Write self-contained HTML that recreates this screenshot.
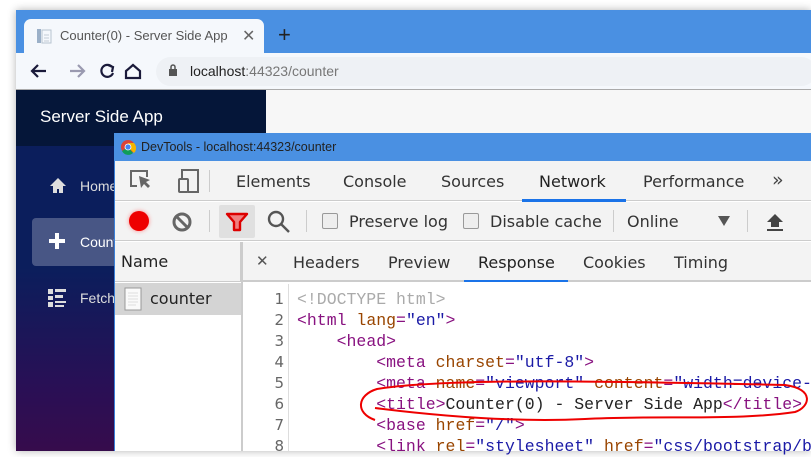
<!DOCTYPE html>
<html><head><meta charset="utf-8"><style>
*{box-sizing:border-box;margin:0;padding:0}
body{width:811px;height:451px;overflow:hidden;background:#fff;font-family:"Liberation Sans",sans-serif;position:relative}
.a{position:absolute}
.dt{font-family:"DejaVu Sans","Liberation Sans",sans-serif;color:#333}
.code{font-family:"Liberation Mono",monospace;font-size:16.5px;white-space:pre;line-height:21px}
.t{color:#881280}.n{color:#994500}.v{color:#1a1aa6}
</style></head><body>
<div class="a" style="left:16px;top:10px;width:795px;height:441px;box-shadow:0 0 8px rgba(0,0,0,.3)"></div>
<div class="a" style="left:16px;top:10px;width:795px;height:43px;background:#4a90e2"></div>
<div class="a" style="left:24px;top:19px;width:240px;height:36px;background:#f5f8fc;border-radius:7px 7px 0 0"></div>
<svg class="a" style="left:36px;top:28px" width="16" height="16"><rect x="1" y="1" width="4" height="14" fill="#9bb0c8"/><rect x="6" y="2" width="9" height="13" fill="none" stroke="#b8c4d0"/><path d="M8 7h5M8 10h5M8 13h5" stroke="#c4ccd6"/></svg>
<div class="a" style="left:60px;top:28px;font-size:13px;color:#555">Counter(0) - Server Side App</div>
<div class="a" style="left:242px;top:26px;font-size:16px;color:#666">✕</div>
<div class="a" style="left:278px;top:22px;font-size:22px;color:#222">+</div>
<div class="a" style="left:16px;top:53px;width:795px;height:37px;background:#f5f8fc;border-bottom:1px solid #aaa"></div>
<svg class="a" style="left:28px;top:61px" width="120" height="20" fill="none" stroke-width="2.2"><path d="M18 10H4M10 4L4 10l6 6" stroke="#1a1a3a"/><path d="M42 10h14M50 4l6 6-6 6" stroke="#9a9ab0"/><path d="M84 6a6 6 0 1 0 1 6" stroke="#1a1a3a"/><path d="M80 4l5 2-1 5" stroke="#1a1a3a"/><path d="M98 10l7-6 7 6v7h-14z" stroke="#1a1a3a"/></svg>
<div class="a" style="left:156px;top:57px;width:660px;height:29px;background:#eef1f5;border-radius:15px"></div>
<svg class="a" style="left:168px;top:64px" width="10" height="12"><rect x="1" y="5" width="8" height="7" fill="#555"/><path d="M3 5V3a2 2 0 0 1 4 0v2" stroke="#555" fill="none" stroke-width="1.5"/></svg>
<div class="a" style="left:190px;top:63px;font-size:14px;color:#222">localhost<span style="color:#777">:44323/counter</span></div>
<div class="a" style="left:266px;top:90px;width:545px;height:361px;background:#f7f7f7"></div>
<div class="a" style="left:16px;top:90px;width:250px;height:361px;background:linear-gradient(#0b1e5c 56px,#0b1e5c,#2a0f55 300px,#360c4c)"></div>
<div class="a" style="left:16px;top:90px;width:250px;height:56px;background:#051639"></div>
<div class="a" style="left:40px;top:107px;font-size:17px;color:#fff">Server Side App</div>
<div class="a" style="left:32px;top:218px;width:90px;height:48px;background:rgba(255,255,255,.25);border-radius:4px"></div>
<svg class="a" style="left:48px;top:176px" width="20" height="20"><path d="M2 10L10 2l8 8h-3v7h-4v-4H9v4H5v-7z" fill="#ddd"/></svg>
<div class="a" style="left:80px;top:178px;font-size:14px;color:#ddd">Home</div>
<svg class="a" style="left:47px;top:231px" width="20" height="20"><path d="M8 2h4v6h6v4h-6v6H8v-6H2V8h6z" fill="#fff"/></svg>
<div class="a" style="left:80px;top:234px;font-size:14px;color:#fff">Counter</div>
<svg class="a" style="left:47px;top:288px" width="20" height="20"><path d="M1 1h5v5H1zM1 8h5v4H1zM1 14h5v5H1zM8 1h11v3H8zM8 7h8v3H8zM8 13h11v2H8zM8 17h9v2H8z" fill="#ddd"/></svg>
<div class="a" style="left:80px;top:290px;font-size:14px;color:#ddd">Fetch</div>
<div class="a" style="left:114px;top:133px;width:697px;height:318px;background:#fff;border-left:1px solid #3a80d8"></div>
<div class="a" style="left:114px;top:133px;width:697px;height:28px;background:#4a90e2"></div>
<svg class="a" style="left:120px;top:139px" width="16" height="16"><circle cx="8" cy="8" r="7" fill="#db4437"/><path d="M8 8L2 12A7 7 0 0 0 13 14z" fill="#0f9d58"/><path d="M8 8l6 6A7 7 0 0 0 14 4L8 4z" fill="#f4b400"/><circle cx="8" cy="8" r="3.4" fill="#fff"/><circle cx="8" cy="8" r="2.6" fill="#4285f4"/></svg>
<div class="a" style="left:141px;top:140px;font-size:12.5px;color:#222">DevTools - localhost:44323/counter</div>
<div class="a" style="left:115px;top:161px;width:696px;height:40px;background:#f3f3f3;border-bottom:1px solid #ccc"></div>
<svg class="a" style="left:128px;top:168px" width="90" height="26" fill="none" stroke="#666" stroke-width="2"><path d="M9 18H3V3h16v6"/><path d="M11 8l2 12 3-4 4 4 2-2-4-4 4-2z" fill="#666" stroke="none"/><rect x="51" y="11" width="9" height="13" rx="1"/><path d="M54 11V2h16v22H60"/></svg>
<div class="a" style="left:209px;top:170px;width:1px;height:22px;background:#ccc"></div>
<div class="a dt" style="left:236px;top:172px;font-size:16px">Elements</div>
<div class="a dt" style="left:343px;top:172px;font-size:16px">Console</div>
<div class="a dt" style="left:441px;top:172px;font-size:16px">Sources</div>
<div class="a dt" style="left:539px;top:172px;font-size:16px;color:#222">Network</div>
<div class="a" style="left:522px;top:199px;width:104px;height:3px;background:#1a73e8"></div>
<div class="a dt" style="left:643px;top:172px;font-size:16px">Performance</div>
<div class="a dt" style="left:772px;top:169px;font-size:19px;color:#444">»</div>
<div class="a" style="left:115px;top:202px;width:696px;height:39px;background:#f3f3f3;border-bottom:1px solid #ccc"></div>
<div class="a" style="left:129px;top:211px;width:20px;height:20px;border-radius:50%;background:#e00;box-shadow:0 0 4px #f88"></div>
<svg class="a" style="left:171px;top:211px" width="22" height="22" fill="none" stroke="#666" stroke-width="3"><circle cx="11" cy="11" r="8"/><path d="M5 5l12 12"/></svg>
<div class="a" style="left:209px;top:210px;width:1px;height:22px;background:#ccc"></div>
<div class="a" style="left:219px;top:205px;width:36px;height:33px;background:#e0e0e0;border-radius:2px"></div>
<svg class="a" style="left:225px;top:211px" width="24" height="22"><path d="M2 3h20l-7 8v8h-6v-8z" fill="#f08080" stroke="#d00" stroke-width="2.4" stroke-linejoin="round"/></svg>
<svg class="a" style="left:267px;top:210px" width="24" height="24" fill="none" stroke="#555" stroke-width="2.4"><circle cx="9" cy="9" r="7"/><path d="M14 14l8 8"/></svg>
<div class="a" style="left:306px;top:210px;width:1px;height:22px;background:#ccc"></div>
<div class="a" style="left:322px;top:213px;width:16px;height:16px;border:1px solid #999;border-radius:2px;background:#eee"></div>
<div class="a dt" style="left:349px;top:212px;font-size:16px">Preserve log</div>
<div class="a" style="left:463px;top:213px;width:16px;height:16px;border:1px solid #999;border-radius:2px;background:#eee"></div>
<div class="a dt" style="left:490px;top:212px;font-size:16px">Disable cache</div>
<div class="a" style="left:613px;top:210px;width:1px;height:22px;background:#ccc"></div>
<div class="a dt" style="left:627px;top:212px;font-size:16px">Online</div>
<div class="a" style="left:718px;top:216px;width:0;height:0;border-left:6px solid transparent;border-right:6px solid transparent;border-top:10px solid #555"></div>
<div class="a" style="left:747px;top:210px;width:1px;height:22px;background:#ccc"></div>
<svg class="a" style="left:765px;top:212px" width="20" height="20"><path d="M10 2l8 8h-4v5H6v-5H2z M2 17h16v2H2z" fill="#444"/></svg>
<div class="a" style="left:115px;top:242px;width:126px;height:40px;background:#f3f3f3;border-bottom:1px solid #ccc;border-right:1px solid #ccc"></div>
<div class="a dt" style="left:121px;top:252px;font-size:16px;color:#222">Name</div>
<div class="a" style="left:115px;top:283px;width:126px;height:32px;background:#d4d4d4"></div>
<div class="a" style="left:241px;top:242px;width:2px;height:209px;background:#ccc"></div>
<svg class="a" style="left:124px;top:287px" width="18" height="24"><rect x="1" y="1" width="16" height="22" fill="#fafafa" stroke="#999"/><path d="M4 6h10M4 9h10M4 12h10M4 15h10M4 18h8" stroke="#ddd"/></svg>
<div class="a dt" style="left:150px;top:289px;font-size:16px;color:#222">counter</div>
<div class="a" style="left:243px;top:242px;width:568px;height:40px;background:#f3f3f3;border-bottom:2px solid #ccc"></div>
<div class="a dt" style="left:256px;top:252px;font-size:15px;color:#555">✕</div>
<div class="a dt" style="left:293px;top:253px;font-size:16px">Headers</div>
<div class="a dt" style="left:388px;top:253px;font-size:16px">Preview</div>
<div class="a dt" style="left:478px;top:253px;font-size:16px;color:#222">Response</div>
<div class="a" style="left:464px;top:280px;width:104px;height:2px;background:#1a73e8"></div>
<div class="a dt" style="left:583px;top:253px;font-size:16px">Cookies</div>
<div class="a dt" style="left:674px;top:253px;font-size:16px">Timing</div>
<div class="a" style="left:288px;top:284px;width:1px;height:167px;background:#ddd"></div>
<div class="a code" style="left:258px;top:289px;width:26px;text-align:right;color:#666;font-family:'DejaVu Sans',sans-serif;font-size:15px">1
2
3
4
5
6
7
8</div>
<div class="a code" style="left:297px;top:289px"><span style="color:#aaa">&lt;!DOCTYPE html&gt;</span>
<span class="t">&lt;html </span><span class="n">lang</span><span class="t">=</span><span class="v">"en"</span><span class="t">&gt;</span>
    <span class="t">&lt;head&gt;</span>
        <span class="t">&lt;meta </span><span class="n">charset</span><span class="t">=</span><span class="v">"utf-8"</span><span class="t">&gt;</span>
        <span class="t">&lt;meta </span><span class="n">name</span><span class="t">=</span><span class="v">"viewport"</span> <span class="n">content</span><span class="t">=</span><span class="v">"width=device-</span>
        <span class="t">&lt;title&gt;</span><span style="color:#222">Counter(0) - Server Side App</span><span class="t">&lt;/title&gt;</span>
        <span class="t">&lt;base </span><span class="n">href</span><span class="t">=</span><span class="v">"/"</span><span class="t">&gt;</span>
        <span class="t">&lt;link </span><span class="n">rel</span><span class="t">=</span><span class="v">"stylesheet"</span> <span class="n">href</span><span class="t">=</span><span class="v">"css/bootstrap/b</span></div>
<svg class="a" style="left:355px;top:375px" width="456" height="50" fill="none" stroke="#e00" stroke-width="2"><path d="M20 45C0 38 2 20 22 14C90 3 250 6 430 10C460 14 455 32 440 37C380 46 300 40 230 44C150 48 60 38 20 33"/></svg>
</body></html>
